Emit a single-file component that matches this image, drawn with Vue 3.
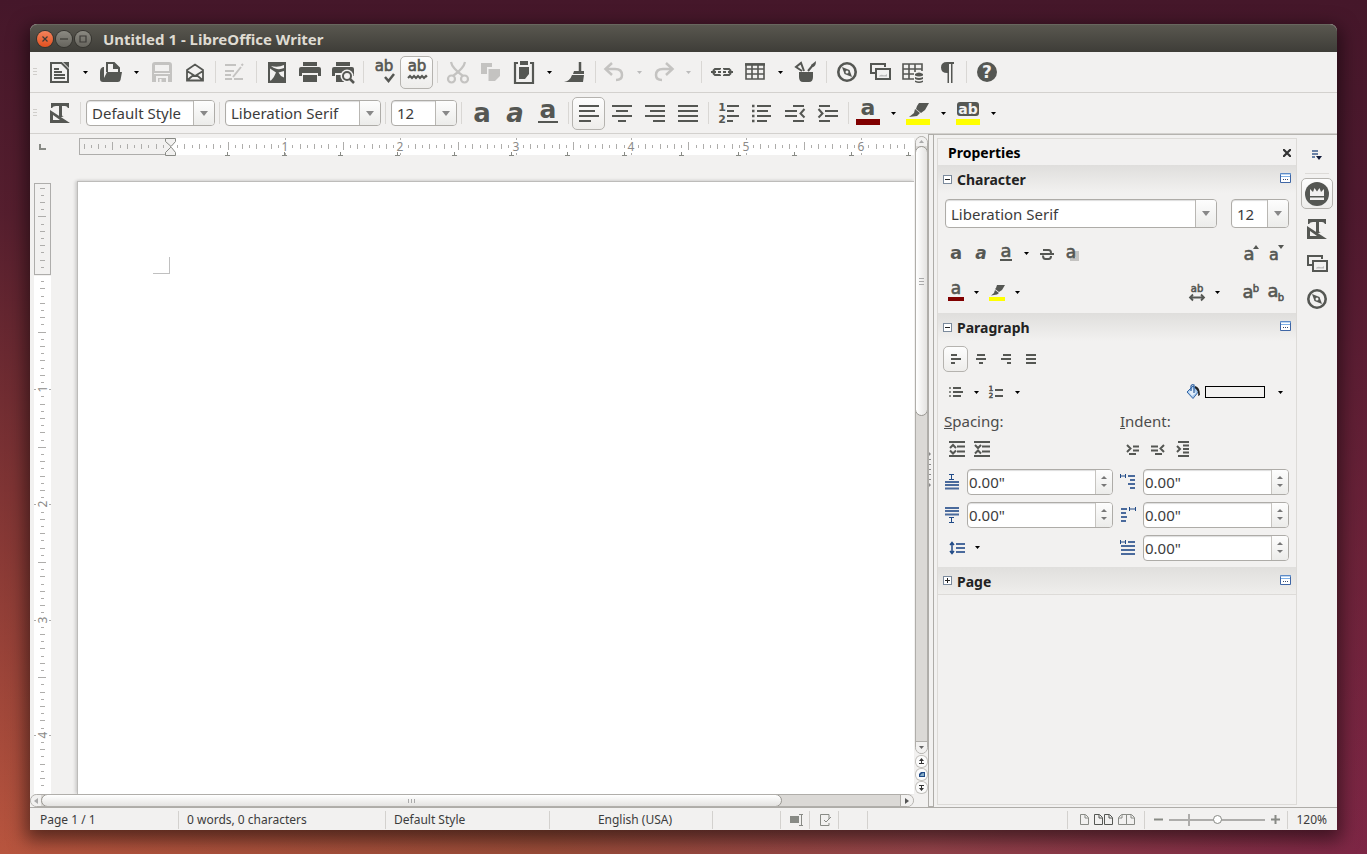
<script setup>
import { ref, computed, onMounted, onBeforeUnmount } from 'vue'

const SEP = { sep: true }
const standardTools = [
  { icon: 'new', label: 'New', drop: true },
  { icon: 'open', label: 'Open', drop: true },
  { icon: 'save', label: 'Save', off: true },
  { icon: 'mail', label: 'Email' },
  SEP,
  { icon: 'edit', label: 'Edit mode', off: true },
  SEP,
  { icon: 'pdf', label: 'Export as PDF' },
  { icon: 'print', label: 'Print' },
  { icon: 'preview', label: 'Print preview' },
  SEP,
  { icon: 'spell', label: 'Spelling' },
  { icon: 'autospell', label: 'Automatic spell checking', on: true },
  SEP,
  { icon: 'cut', label: 'Cut', off: true },
  { icon: 'copy', label: 'Copy', off: true },
  { icon: 'paste', label: 'Paste', drop: true },
  { icon: 'brush', label: 'Clone formatting' },
  SEP,
  { icon: 'undo', label: 'Undo', off: true, drop: true, size: 'narrow' },
  { icon: 'redo', label: 'Redo', off: true, drop: true, size: 'narrow' },
  SEP,
  { icon: 'link', label: 'Hyperlink' },
  { icon: 'table', label: 'Table', drop: true },
  { icon: 'draw', label: 'Show draw functions' },
  SEP,
  { icon: 'compass', label: 'Navigator' },
  { icon: 'gallery', label: 'Gallery' },
  { icon: 'data', label: 'Data sources' },
  { icon: 'pilcrow', label: 'Formatting marks' },
  SEP,
  { icon: 'help', label: 'Help' },
]
const formatTools = [
  { icon: 'bold', label: 'Bold' },
  { icon: 'italic', label: 'Italic' },
  { icon: 'underline', label: 'Underline' },
  SEP,
  { icon: 'left', label: 'Align left', on: true },
  { icon: 'center', label: 'Centre' },
  { icon: 'right', label: 'Align right' },
  { icon: 'justify', label: 'Justify' },
  SEP,
  { icon: 'numbers', label: 'Numbering' },
  { icon: 'bullets', label: 'Bullets' },
  { icon: 'outdent', label: 'Decrease indent' },
  { icon: 'indent', label: 'Increase indent' },
  SEP,
  { icon: 'fontcolor', label: 'Font colour', drop: true, size: 'medium' },
  { icon: 'highlight', label: 'Highlighting', drop: true, size: 'medium' },
  { icon: 'charback', label: 'Character background', drop: true, size: 'medium' },
]

// Rulers: sixteenths of an inch at 120% zoom, drawn only as far as the ruler reaches.
const INCH = 115.2
const MARGIN = 92
const TAB = 56.75
const hBox = ref(null)
const vBox = ref(null)
const hLength = ref(0)
const vLength = ref(0)
function ticks(length) {
  const out = []
  for (let n = -12; (n * INCH) / 16 < length - MARGIN - 4; n++) {
    if (n === 0) continue
    const mod = Math.abs(n) % 16
    out.push({ at: Math.round((n * INCH) / 16), num: mod === 0 ? n / 16 : 0, len: mod === 8 ? 8 : mod % 2 ? 3 : 5 })
  }
  return out
}
const hTicks = computed(() => ticks(hLength.value))
const vTicks = computed(() => ticks(vLength.value))
const tabs = computed(() => {
  const count = Math.max(0, Math.floor((hLength.value - MARGIN) / TAB))
  return Array.from({ length: count }, (_, i) => Math.round((i + 1) * TAB))
})
let observer
function measure() {
  hLength.value = hBox.value.clientWidth
  vLength.value = vBox.value.clientHeight
}
onMounted(() => {
  measure()
  observer = new ResizeObserver(measure)
  observer.observe(hBox.value)
  observer.observe(vBox.value)
})
onBeforeUnmount(() => observer.disconnect())

const style = ref('Default Style')
const font = ref('Liberation Serif')
const size = ref('12')
const above = ref('0.00"')
const below = ref('0.00"')
const before = ref('0.00"')
const after = ref('0.00"')
const first = ref('0.00"')
const zoom = ref(50)
</script>

<template>
  <svg class="defs" aria-hidden="true">
    <defs>
      <g id="new"><path d="M3 3h10.500L20 9.500V22H3z" fill="none" stroke="currentColor" stroke-width="2" /><path d="M15 2h6v6z" fill="currentColor" /><path d="M6 9h5M6 12h8M6 15h11M6 18h11" stroke="currentColor" stroke-width="2" /></g>
      <g id="open"><path d="M8 12V3h7l5 5v4" fill="none" stroke="currentColor" stroke-width="2" /><path d="M14 2l7 7h-7z" fill="currentColor" /><path d="M5 7H4Q1 8 1 12v7q0 3 3 3h15q2 0 2.500-2l1.500-8H8L5 18z" fill="currentColor" /></g>
      <g id="save"><path d="M5 2h14q3 0 3 3v17H2V5q0-3 3-3z" fill="currentColor" /><path d="M5 5h14v6H5z" fill="#f2f1f0" /><path d="M4 13.500h16" stroke="#f2f1f0" /><path d="M6 22v-6h12v6z" fill="#f2f1f0" /><path d="M8 18h8v4H8z" fill="currentColor" /><path d="M9.500 19h2v3h-2z" fill="#f2f1f0" /></g>
      <g id="mail"><path d="M4 10l8-5.500L20 10v10.500H4zM4 11l8 5 8-5M4.500 20l6-5M19.500 20l-6-5" fill="none" stroke="currentColor" stroke-width="1.800" /></g>
      <g id="edit" stroke="currentColor" stroke-width="2"><path d="M1 5h11M1 11h9M1 15h6M1 19h7M10 19h9" /><path d="M9 17l8-10M17.500 5.500l1.500-1.500" /></g>
      <g id="pdf"><path d="M3 2h18v21H3z" fill="currentColor" /><path d="M6 6q7 2 13-1v3q-3 1.500-7 1Q8 8 6 6z" fill="#f2f1f0" /><path d="M5 8.500l6 4Q9 18 6 20.500H5zM19 11v6.500Q15 16 13.500 12.500z" fill="#f2f1f0" /></g>
      <g id="print"><path d="M5 2h14v4H5zM1 9q0-2 2-2h18q2 0 2 2v7h-3v-3H4v3H1zM5 15h14v7H5z" fill="currentColor" /></g>
      <g id="preview"><path d="M5 2h14v4H5zM1 9q0-2 2-2h18q2 0 2 2v7h-3v-3H4v3H1zM5 15h8v7H5z" fill="currentColor" /><circle cx="16" cy="16" r="6.500" fill="#f2f1f0" /><circle cx="16" cy="16" r="4" fill="none" stroke="currentColor" stroke-width="2" /><path d="M19 19l4 4" stroke="currentColor" stroke-width="2.500" /></g>
      <g id="spell"><text x="12" y="11" font-size="15" class="glyph mid">ab</text><path d="M13 17l3.500 4L22 14" fill="none" stroke="currentColor" stroke-width="2.500" /></g>
      <g id="autospell"><text x="12" y="11" font-size="15" class="glyph mid">ab</text><path d="M3 18l2-2 2 2 2-2 2 2 2-2 2 2 2-2 2 2 2-2 1 1" fill="none" stroke="currentColor" stroke-width="2" /></g>
      <g id="cut" fill="none" stroke="currentColor" stroke-width="2.200"><circle cx="5.500" cy="19" r="3.500" /><circle cx="18.500" cy="19" r="3.500" /><path d="M5 2q1 6 12 14M19 2q-1 6-12 14" /></g>
      <g id="copy"><path d="M2 3h11v4H8v7H2z" fill="currentColor" /><path d="M9.500 9H21v7l-5 5H9.500z" fill="currentColor" /></g>
      <g id="paste"><path d="M3 3h18v20H3z" fill="none" stroke="currentColor" stroke-width="2.200" /><path d="M6 1h12v5H6z" fill="#f2f1f0" /><path d="M8 1h8v4H8zM7 7h10v7l-4 5H7z" fill="currentColor" /></g>
      <g id="brush"><path d="M17 2v9" stroke="currentColor" stroke-width="2.500" /><path d="M11 11h10v3H10zM9 15h12l-1 7H1q6-1 8-7z" fill="currentColor" /></g>
      <g id="undo"><path d="M3 9h9q7 0 7 6 0 5-6 5" fill="none" stroke="currentColor" stroke-width="2.500" /><path d="M9 3L2.500 9 9 15" fill="none" stroke="currentColor" stroke-width="2.500" /></g>
      <g id="redo"><path d="M20 9h-9q-7 0-7 6 0 5 6 5" fill="none" stroke="currentColor" stroke-width="2.500" /><path d="M14 3l6.500 6-6.500 6" fill="none" stroke="currentColor" stroke-width="2.500" /></g>
      <g id="link" fill="none" stroke="currentColor" stroke-width="2"><path d="M10 9.500V9H5l-2 2M10 14.500v.5H5l-2-2M14 9.500V9h5l2 2M14 14.500v.5h5l2-2M1 12h5M8 12h3M13 12h3M18 12h5" /></g>
      <g id="table" fill="none" stroke="currentColor" stroke-width="1.600"><path d="M3 4h18v15H3zM3 9h18M3 14h18M9 4v15M15 4v15" /><path d="M2 4.500h20" stroke-width="2.500" /></g>
      <g id="draw"><path d="M5 12h14v5q0 5-4 5H9q-4 0-4-5z" fill="currentColor" /><path d="M8 11L2 7l5-4 3 8M14 11l5-6" fill="none" stroke="currentColor" stroke-width="2" /><path d="M17 5l5-4q0 6-4 6z" fill="currentColor" /></g>
      <g id="compass"><circle cx="12" cy="12" r="8.700" fill="none" stroke="currentColor" stroke-width="2.600" /><path d="M7 7l7.500 3L17 17l-7.500-3z" fill="currentColor" /><circle cx="12" cy="12" r="1.500" fill="#f2f1f0" /></g>
      <g id="gallery" fill="none" stroke="currentColor" stroke-width="2"><path d="M7 13H3V4h14v3M8 9h14v10H8z" /><path d="M11 16q2-2 4-1t4-1v2.500h-8z" fill="#bbb" stroke="none" /></g>
      <g id="data"><path d="M14 19H2V4h19v7M2 9h19M2 14h12M8 4v15M14 4v11" fill="none" stroke="currentColor" stroke-width="1.600" /><path d="M13 12h11v11H13z" fill="#f2f1f0" /><path d="M14 14q4-3 8 0v1.500q-4 2-8 0zM14 17q4 2 8 0v2q-4 2-8 0zM14 20.500q4 2 8 0V22q-4 2-8 0z" fill="currentColor" /></g>
      <g id="pilcrow"><path d="M20 2v2h-1.500v19H17V4h-2v19h-1.500V13Q7 13 7 7.500 7 2 13 2z" fill="currentColor" /></g>
      <g id="help"><circle cx="12" cy="12" r="10" fill="currentColor" /><text x="12" y="18" font-size="17" class="glyph light">?</text></g>
      <g id="styles"><path d="M3 2h18v5h-1q-1-2-3-2h-3v9q0 2 2 2h-5V5H8Q5 5 4 7H3z" fill="currentColor" /><path d="M2 9l20 13H2zM5 14v5h7z" fill="currentColor" fill-rule="evenodd" /></g>
      <g id="bold"><text x="12" y="21" font-size="26" class="glyph">a</text></g>
      <g id="italic"><text x="12" y="21" font-size="26" class="glyph slant">a</text></g>
      <g id="underline"><text x="12" y="17" font-size="25" class="glyph">a</text><path d="M2 21h20" stroke="currentColor" stroke-width="2" /></g>
      <g id="left"><path d="M2 5h20M2 10h16M2 15h20M2 20h12" stroke="currentColor" stroke-width="2" /></g>
      <g id="center"><path d="M2 5h20M6 10h12M2 15h20M8 20h8" stroke="currentColor" stroke-width="2" /></g>
      <g id="right"><path d="M2 5h20M7 10h15M2 15h20M10 20h12" stroke="currentColor" stroke-width="2" /></g>
      <g id="justify"><path d="M2 5h20M2 10h20M2 15h20M2 20h20" stroke="currentColor" stroke-width="2" /></g>
      <g id="numbers"><text x="5" y="10" font-size="11" class="glyph">1</text><text x="5" y="22" font-size="11" class="glyph">2</text><path d="M10 5h12M10 10h7M10 15h12M10 20h6" stroke="currentColor" stroke-width="2" /></g>
      <g id="bullets"><path d="M7 5h14M7 10h11M7 15h14M7 20h10" stroke="currentColor" stroke-width="2" /><path d="M2 5h2.500M2 10h2.500M2 15h2.500M2 20h2.500" stroke="currentColor" stroke-width="2.500" /></g>
      <g id="outdent"><path d="M10 5h11M2 10h12M2 15h12M10 20h11M21.500 8l-4 4.500 4 4" fill="none" stroke="currentColor" stroke-width="2" /></g>
      <g id="indent"><path d="M3 5h11M9 10h13M9 15h13M3 20h11M2.500 8l4 4.500-4 4" fill="none" stroke="currentColor" stroke-width="2" /></g>
      <g id="fontcolor"><text x="12" y="14" font-size="22" class="glyph">a</text><path d="M0 18h24v6H0z" fill="#800000" /></g>
      <g id="highlight"><path d="M11 5l2-3h10l-4 7-4 3-5-4zM9 8l5 4-3 3-8 1 5-4z" fill="currentColor" /><path d="M0 18h24v6H0z" fill="#ff0" /></g>
      <g id="charback"><rect x="1" y="1" width="22" height="14" rx="3" fill="currentColor" /><text x="12" y="13" font-size="14" class="glyph light">ab</text><path d="M0 18h24v6H0z" fill="#ff0" /></g>
      <g id="crown"><circle cx="12" cy="12" r="12" fill="currentColor" /><path d="M5 14V7l3 3 1.500-4L12 9.500 14.500 6 16 10l3-3v7zM5 15.500h14V18H5z" fill="#f2f1f0" /></g>

      <g id="s-bold"><text x="8" y="13" font-size="18" class="glyph">a</text></g>
      <g id="s-italic"><text x="8" y="13" font-size="17" class="glyph slant">a</text></g>
      <g id="s-underline"><text x="8" y="11" font-size="18" class="glyph mid">a</text><path d="M2 14h12" stroke="currentColor" stroke-width="2" /></g>
      <g id="s-strike"><path d="M1 8h14M4 4h5.500q2.500 0 2.500 3M4 9.500Q4 13 6.500 13h3q2.500 0 2.500-3" fill="none" stroke="currentColor" stroke-width="2" /></g>
      <g id="s-shadow"><path d="M7 5h8v10H6v-3h6z" fill="#c4c3c1" /><text x="7" y="12" font-size="17" class="glyph mid">a</text></g>
      <g id="s-grow"><text x="6" y="14" font-size="18" class="glyph mid">a</text><path d="M10 3l3-4 3 4z" fill="currentColor" /></g>
      <g id="s-shrink"><text x="6" y="14" font-size="16" class="glyph mid">a</text><path d="M10-1h6l-3 4z" fill="currentColor" /></g>
      <g id="s-fontcolor"><text x="8" y="9" font-size="17" class="glyph mid">a</text><path d="M0 12h16v4H0z" fill="#800000" /></g>
      <g id="s-highlight"><path d="M7 3l1-3h8l-3 5-3 2-4-3zM6 5l4 3-2 1.500-6 1L5 8z" fill="currentColor" /><path d="M0 12h16v4H0z" fill="#ff0" /></g>
      <g id="s-spacing"><text x="8" y="7" font-size="10" class="glyph mid">ab</text><path d="M1 12.500h14M4 9.500l-3 3 3 3M12 9.500l3 3-3 3" fill="none" stroke="currentColor" stroke-width="1.800" /></g>
      <g id="s-super"><text x="5" y="13" font-size="18" class="glyph mid">a</text><text x="13" y="7" font-size="10" class="glyph mid">b</text></g>
      <g id="s-sub"><text x="5" y="12" font-size="18" class="glyph mid">a</text><text x="13" y="16" font-size="10" class="glyph mid">b</text></g>
      <g id="s-left"><path d="M3 4h6M3 8h10M3 12h4" stroke="currentColor" stroke-width="2" /></g>
      <g id="s-center"><path d="M4 4h8M3 8h10M6 12h4" stroke="currentColor" stroke-width="2" /></g>
      <g id="s-right"><path d="M5 4h8M3 8h10M9 12h4" stroke="currentColor" stroke-width="2" /></g>
      <g id="s-justify"><path d="M3 4h10M3 8h10M3 12h10" stroke="currentColor" stroke-width="2" /></g>
      <g id="s-bullets"><path d="M5 4h8M5 8h10M5 12h8" stroke="currentColor" stroke-width="2" /><path d="M1 4h2M1 8h2M1 12h2" stroke="#888a85" stroke-width="2" /></g>
      <g id="s-numbers"><text x="2" y="7" font-size="7" class="glyph mid">1</text><text x="2" y="14" font-size="7" class="glyph mid">2</text><path d="M6 6h8M6 12h8" stroke="currentColor" stroke-width="2" /></g>
      <g id="s-more"><path d="M0 1h16M0 15h16M8 5.500h8M8 10.500h8" stroke="currentColor" stroke-width="2" /><path d="M1 7l3-3 3 3M1 9.500l3 3 3-3" fill="none" stroke="currentColor" stroke-width="2" /></g>
      <g id="s-less"><path d="M0 1h16M0 15h16M8 5.500h8M8 10.500h8" stroke="currentColor" stroke-width="2" /><path d="M1 4l3 3 3-3M1 12.500l3-3 3 3" fill="none" stroke="currentColor" stroke-width="2" /></g>
      <g id="s-indent"><path d="M2 4l3.500 3.500L2 11M8 5.500h6M8 9.500h6M4 13h7" fill="none" stroke="currentColor" stroke-width="2" /></g>
      <g id="s-outdent"><path d="M14 4l-3.500 3.500L14 11M1 5.500h7M1 9.500h7M5 13h7" fill="none" stroke="currentColor" stroke-width="2" /></g>
      <g id="s-hang"><path d="M3 1h11M3 15h11M8 4.500h6M8 8h6M8 11.500h6M2 5l3 3-3 3" fill="none" stroke="currentColor" stroke-width="2" /></g>
      <g id="s-fill"><path d="M2 8l6-6 6 5-6 7.500z" fill="#a9cbee" stroke="#3465a4" /><path d="M4 8l4-4 3 5-4 3z" fill="#e4effa" /><path d="M6 7V2q1-2 3-1v8" fill="none" stroke="#3465a4" stroke-width="1.300" /><path d="M10 2q5 1 5 9l-2 1q1-5-3-8z" fill="#222" /></g>
      <g id="s-above" stroke="#204a87"><path d="M5 .5h5M7.500 1v5M5 5.500h5" /><path d="M1 8h14M1 11h14M1 14.500h14" stroke-width="2" stroke="#4a6a9c" /></g>
      <g id="s-below" stroke="#204a87"><path d="M5 10.500h5M7.500 10v5M5 15.500h5" /><path d="M1 1h14M1 4h14M1 7.500h14" stroke-width="2" stroke="#4a6a9c" /></g>
      <g id="s-before" stroke="#204a87"><path d="M.5 0v4M1 2h5M5.500 0v4" /><path d="M8 2h7M10 6h5M8 10h7M10 14h5" stroke-width="2" stroke="#4a6a9c" /></g>
      <g id="s-after" stroke="#204a87"><path d="M9.500 0v4M10 2h5M15.500 0v4" /><path d="M1 2h6M1 6h5M1 10h6M1 14h5" stroke-width="2" stroke="#4a6a9c" /></g>
      <g id="s-first" stroke="#204a87"><path d="M.5 0v4M1 2h5M5.500 0v4" /><path d="M8 2h7M1 6h14M1 10h14M1 14h14" stroke-width="2" stroke="#4a6a9c" /></g>
      <g id="s-line" stroke="#204a87"><path d="M3 3v10M1 5l2-2.500L5 5M1 11l2 2.500L5 11" fill="none" stroke-width="1.500" /><path d="M7 4h9M7 8h9M7 12h9" stroke-width="2" stroke="#4a6a9c" /></g>
      <g id="arrow"><path d="M0 0h5L2.500 3z" fill="currentColor" /></g>
      <g id="more"><path d="M.5 .5h10v9H.5z" fill="#fff" stroke="#3f66a5" /><path d="M0 1h11M1 3.500h9" stroke="#7fb0e6" stroke-width="1" /><path d="M3 6.500h1M5 6.500h1M7 6.500h1" stroke="#3b4b6c" /></g>
    </defs>
  </svg>

  <div class="desktop">
    <main class="window">
      <header class="titlebar">
        <button class="wm close" aria-label="Close"><svg viewBox="0 0 16 16"><path d="M5.500 5.500l5 5M10.500 5.500l-5 5" /></svg></button>
        <button class="wm" aria-label="Minimise"><svg viewBox="0 0 16 16"><path d="M4 8h8" /></svg></button>
        <button class="wm" aria-label="Maximise"><svg viewBox="0 0 16 16"><path d="M5 5h6v6H5z" /></svg></button>
        <h1>Untitled 1 - LibreOffice Writer</h1>
      </header>

      <div class="toolbar standard">
        <span class="grip"></span>
        <template v-for="(t, i) in standardTools" :key="i">
          <span v-if="t.sep" class="sep"></span>
          <template v-else>
            <button class="tool" :class="[t.size, { on: t.on, off: t.off }]" :aria-label="t.label"><svg class="icon"><use :href="'#' + t.icon" /></svg></button>
            <button v-if="t.drop" class="drop" :class="{ off: t.off }" :aria-label="t.label + ' options'"><svg class="tri"><use href="#arrow" /></svg></button>
          </template>
        </template>
      </div>

      <div class="toolbar">
        <span class="grip"></span>
        <button class="tool medium" aria-label="Styles"><svg class="icon"><use href="#styles" /></svg></button>
        <span class="sep"></span>
        <span class="combo small style"><input v-model="style" aria-label="Paragraph style" /><button aria-label="Choose style"><i class="caret"></i></button></span>
        <span class="sep"></span>
        <span class="combo small font"><input v-model="font" aria-label="Font name" /><button aria-label="Choose font"><i class="caret"></i></button></span>
        <span class="sep"></span>
        <span class="combo small size"><input v-model="size" aria-label="Font size" /><button aria-label="Choose size"><i class="caret"></i></button></span>
        <span class="sep"></span>
        <template v-for="(t, i) in formatTools" :key="i">
          <span v-if="t.sep" class="sep"></span>
          <template v-else>
            <button class="tool" :class="[t.size, { on: t.on }]" :aria-label="t.label"><svg class="icon"><use :href="'#' + t.icon" /></svg></button>
            <button v-if="t.drop" class="drop" :aria-label="t.label + ' options'"><svg class="tri"><use href="#arrow" /></svg></button>
          </template>
        </template>
      </div>

      <div class="body">
        <section class="editor">
          <div class="tabkind"><svg width="7" height="6"><path d="M1 0v5h6" fill="none" stroke="#888a85" stroke-width="2" /></svg></div>
          <div ref="hBox" class="hruler">
            <svg height="20" width="100%">
              <rect x="93" y="0" width="100%" height="17" fill="#fff" />
              <rect x="2.500" y=".5" width="91" height="16" fill="#f2f1f0" stroke="#aeadab" />
              <g transform="translate(93 0)" shape-rendering="crispEdges">
                <template v-for="t in hTicks" :key="t.at">
                  <template v-if="t.num"><path :d="`M${t.at} 0v2M${t.at} 15v2`" stroke="#aeadab" /><text :x="t.at" y="13" class="num">{{ t.num }}</text></template>
                  <path v-else :d="`M${t.at} ${8 - Math.floor(t.len / 2)}v${t.len}`" stroke="#aeadab" />
                </template>
                <path v-for="x in tabs" :key="x" :d="`M${x} 14v3M${x - 2} 17h5`" fill="none" stroke="#888a85" />
              </g>
              <path d="M88.500 .5h10v3l-4 4.500-1 0-5-4.500zM88.500 17.500h10v-3l-4-5-1 0-5 5z" fill="#f2f1f0" stroke="#888a85" />
            </svg>
          </div>
          <div ref="vBox" class="vruler">
            <svg width="18" height="100%">
              <rect x="0" y="93" width="17" height="100%" fill="#fff" />
              <rect x=".5" y=".5" width="16" height="91" fill="#f2f1f0" stroke="#aeadab" />
              <g transform="translate(0 91)">
                <g v-for="t in vTicks" :key="t.at" :transform="`translate(8 ${t.at})`" shape-rendering="crispEdges">
                  <template v-if="t.num"><path d="M-8 0h2M7 0h2" stroke="#aeadab" /><text transform="rotate(-90)" x="0" y="5" class="num">{{ t.num }}</text></template>
                  <path v-else :d="`M${-Math.floor(t.len / 2)} 0h${t.len}`" stroke="#aeadab" />
                </g>
              </g>
            </svg>
          </div>
          <div class="page"><div class="corner"></div></div>
          <div class="vscroll">
            <div class="vtrack">
              <button class="vbtn" aria-label="Scroll up"><svg class="tri flip"><use href="#arrow" /></svg></button>
              <div class="vthumb"><i></i><i></i><i></i></div>
              <span class="space"></span>
              <button class="vbtn down" aria-label="Scroll down"><svg class="tri"><use href="#arrow" /></svg></button>
            </div>
            <button class="nav" aria-label="Previous page"><svg viewBox="0 0 11 11"><path d="M3 5l2.500-3L8 5zM3 7h5v1H3zM5 4h1v4H5z" fill="#333" /></svg></button>
            <button class="nav" aria-label="Navigation"><svg viewBox="0 0 11 11"><path d="M3 8V5l2-2h4v5z" fill="#204a87" /><path d="M4 7q1-3 4-3v3z" fill="#8ab0c8" /></svg></button>
            <button class="nav" aria-label="Next page"><svg viewBox="0 0 11 11"><path d="M3 6h5L5.500 9zM3 3h5v1H3zM5 3h1v4H5z" fill="#333" /></svg></button>
          </div>
          <div class="hscroll">
            <button class="hbtn" aria-label="Scroll left"><svg viewBox="0 0 4 6"><path d="M4 0v6L0 3z" fill="#aaa" /></svg></button>
            <div class="hthumb"><i></i><i></i><i></i></div>
            <span class="space"></span>
            <button class="hbtn end" aria-label="Scroll right"><svg viewBox="0 0 4 6"><path d="M0 0v6l4-3z" fill="#555" /></svg></button>
          </div>
        </section>

        <div class="splitter"><svg width="3" height="40"><path d="M0 1l2 2-2 2zM0 32l2 2-2 2z" fill="#888" /><path d="M1 8v23" stroke="#888" stroke-width="2" stroke-dasharray="1 4" /></svg></div>

        <aside class="panel">
          <header class="ptitle"><h2>Properties</h2><button aria-label="Close sidebar"><svg width="8" height="8"><path d="M0 0l8 8M8 0L0 8" stroke="#333" stroke-width="2.200" /></svg></button></header>

          <h3><button class="fold" aria-label="Collapse Character"><svg><path d="M2 4.500h5" /></svg></button>Character<button class="dlg" aria-label="Character options"><svg><use href="#more" /></svg></button></h3>
          <div class="row tall">
            <span class="combo grow"><input v-model="font" aria-label="Sidebar font name" /><button aria-label="Choose font"><i class="caret"></i></button></span>
            <span class="combo psize"><input v-model="size" aria-label="Sidebar font size" /><button aria-label="Choose size"><i class="caret"></i></button></span>
          </div>
          <div class="row r39">
            <button class="st" aria-label="Bold"><svg><use href="#s-bold" /></svg></button>
            <button class="st" aria-label="Italic"><svg><use href="#s-italic" /></svg></button>
            <button class="st" aria-label="Underline"><svg><use href="#s-underline" /></svg></button>
            <button class="sd" aria-label="Underline options"><svg class="tri"><use href="#arrow" /></svg></button>
            <button class="st" aria-label="Strikethrough"><svg><use href="#s-strike" /></svg></button>
            <button class="st" aria-label="Shadow"><svg><use href="#s-shadow" /></svg></button>
            <span class="space"></span>
            <button class="st" aria-label="Increase font"><svg><use href="#s-grow" /></svg></button>
            <button class="st" aria-label="Reduce font"><svg><use href="#s-shrink" /></svg></button>
          </div>
          <div class="row r39">
            <button class="st" aria-label="Font colour"><svg><use href="#s-fontcolor" /></svg></button>
            <button class="sd" aria-label="Font colour options"><svg class="tri"><use href="#arrow" /></svg></button>
            <button class="st" aria-label="Highlighting"><svg><use href="#s-highlight" /></svg></button>
            <button class="sd" aria-label="Highlighting options"><svg class="tri"><use href="#arrow" /></svg></button>
            <span class="space"></span>
            <button class="st" aria-label="Character spacing"><svg><use href="#s-spacing" /></svg></button>
            <button class="sd gap" aria-label="Spacing options"><svg class="tri"><use href="#arrow" /></svg></button>
            <button class="st" aria-label="Superscript"><svg><use href="#s-super" /></svg></button>
            <button class="st" aria-label="Subscript"><svg><use href="#s-sub" /></svg></button>
          </div>

          <h3><button class="fold" aria-label="Collapse Paragraph"><svg><path d="M2 4.500h5" /></svg></button>Paragraph<button class="dlg" aria-label="Paragraph options"><svg><use href="#more" /></svg></button></h3>
          <div class="row r36">
            <button class="st on" aria-label="Left"><svg><use href="#s-left" /></svg></button>
            <button class="st" aria-label="Centre"><svg><use href="#s-center" /></svg></button>
            <button class="st" aria-label="Right"><svg><use href="#s-right" /></svg></button>
            <button class="st" aria-label="Justified"><svg><use href="#s-justify" /></svg></button>
          </div>
          <div class="row r30">
            <button class="st" aria-label="Bullets"><svg><use href="#s-bullets" /></svg></button>
            <button class="sd" aria-label="Bullet options"><svg class="tri"><use href="#arrow" /></svg></button>
            <button class="st" aria-label="Numbering"><svg><use href="#s-numbers" /></svg></button>
            <button class="sd" aria-label="Numbering options"><svg class="tri"><use href="#arrow" /></svg></button>
            <span class="space"></span>
            <button class="st" aria-label="Background colour"><svg><use href="#s-fill" /></svg></button>
            <span class="swatch"></span>
            <button class="sd" aria-label="Background options"><svg class="tri"><use href="#arrow" /></svg></button>
          </div>
          <div class="cols">
            <div class="col">
              <label for="above" class="lab"><u>S</u>pacing:</label>
              <div class="line"><button class="st" aria-label="Increase spacing"><svg><use href="#s-more" /></svg></button><button class="st" aria-label="Decrease spacing"><svg><use href="#s-less" /></svg></button></div>
              <div class="spin"><svg><use href="#s-above" /></svg><span><input id="above" v-model="above" /><b><button class="up" aria-label="Increase above"></button><button aria-label="Decrease above"></button></b></span></div>
              <div class="spin"><svg><use href="#s-below" /></svg><span><input v-model="below" aria-label="Below" /><b><button class="up" aria-label="Increase below"></button><button aria-label="Decrease below"></button></b></span></div>
              <div class="spin"><button class="st" aria-label="Line spacing"><svg><use href="#s-line" /></svg></button><button class="sd" aria-label="Line spacing options"><svg class="tri"><use href="#arrow" /></svg></button></div>
            </div>
            <div class="col">
              <label for="before" class="lab"><u>I</u>ndent:</label>
              <div class="line"><button class="st" aria-label="Increase indent"><svg><use href="#s-indent" /></svg></button><button class="st" aria-label="Decrease indent"><svg><use href="#s-outdent" /></svg></button><button class="st" aria-label="Hanging indent"><svg><use href="#s-hang" /></svg></button></div>
              <div class="spin"><svg><use href="#s-before" /></svg><span><input id="before" v-model="before" /><b><button class="up" aria-label="Increase before"></button><button aria-label="Decrease before"></button></b></span></div>
              <div class="spin"><svg><use href="#s-after" /></svg><span><input v-model="after" aria-label="After" /><b><button class="up" aria-label="Increase after"></button><button aria-label="Decrease after"></button></b></span></div>
              <div class="spin"><svg><use href="#s-first" /></svg><span><input v-model="first" aria-label="First line" /><b><button class="up" aria-label="Increase first line"></button><button aria-label="Decrease first line"></button></b></span></div>
            </div>
          </div>

          <h3 class="last"><button class="fold" aria-label="Expand Page"><svg><path d="M2 4.500h5M4.500 2v5" /></svg></button>Page<button class="dlg" aria-label="Page options"><svg><use href="#more" /></svg></button></h3>
        </aside>

        <nav class="deck">
          <button class="menu" aria-label="Sidebar settings"><svg width="10" height="11"><path d="M0 2h6M0 5h6M0 8h3" stroke="#3b5b8c" stroke-width="1.500" /><path d="M4 7h6L7 11z" fill="#111a3a" /></svg></button>
          <button class="on" aria-label="Properties"><svg class="icon"><use href="#crown" /></svg></button>
          <button aria-label="Styles"><svg class="icon"><use href="#styles" /></svg></button>
          <button aria-label="Gallery"><svg class="icon"><use href="#gallery" /></svg></button>
          <button aria-label="Navigator"><svg class="icon"><use href="#compass" /></svg></button>
        </nav>
      </div>

      <footer class="status">
        <span class="cell c1">Page 1 / 1</span>
        <span class="cell c2">0 words, 0 characters</span>
        <span class="cell c3">Default Style</span>
        <span class="cell c4">English (USA)</span>
        <span class="cell c5"></span>
        <span class="cell c6"><svg width="14" height="12"><path d="M1 2h9v7H1z" fill="#888a85" /><path d="M10 .5h4M12.500 1v10M10 11.500h4" stroke="#888a85" /></svg></span>
        <span class="cell c6"><svg width="14" height="12"><path d="M11 5V.5H2.500v11H11V9M6 6l2 2 5-5" fill="none" stroke="#888a85" /></svg></span>
        <span class="cell c6"></span>
        <span class="cell c7"></span>
        <span class="cell views">
          <button aria-label="Single page"><svg width="9" height="11"><path d="M.5 .5h5l3 3v7h-8zM5 1v3h3" fill="none" stroke="#888a85" /></svg></button>
          <button aria-label="Multiple pages"><svg width="19" height="11"><path d="M.5 .5h5l3 3v7h-8zM5 1v3h3M10.500 .5h5l3 3v7h-8zM15 1v3h3" fill="none" stroke="#555753" /></svg></button>
          <button aria-label="Book view"><svg width="17" height="11"><path d="M3.500 .5h5v10h-8v-7zM4 1v3H1M8.500 .5h5l3 3v7h-8zM13 1v3h3" fill="none" stroke="#888a85" /></svg></button>
        </span>
        <span class="cell zoom">
          <button aria-label="Zoom out"><svg width="9" height="9"><path d="M0 4.500h9" stroke="#888a85" stroke-width="2" /></svg></button>
          <input v-model="zoom" type="range" aria-label="Zoom" />
          <button aria-label="Zoom in"><svg width="9" height="9"><path d="M0 4.500h9M4.500 0v9" stroke="#888a85" stroke-width="2" /></svg></button>
        </span>
        <span class="pct">120%</span>
      </footer>
    </main>
  </div>
</template>

<style>
html, body { margin: 0; }
.glyph { font-family: "DejaVu Sans", sans-serif; font-weight: 700; text-anchor: middle; fill: currentColor; }
.glyph.mid { font-family: "DejaVu Sans", sans-serif; font-weight: 400; stroke: currentColor; stroke-width: .6px; }
.glyph.light { fill: #f2f1f0; }
.glyph.slant { font-style: oblique; }
</style>

<style scoped>
* { box-sizing: border-box; }
button { border: 0; padding: 0; margin: 0; background: none; color: inherit; font: inherit; display: flex; align-items: center; justify-content: center; flex: none; }
input { border: 0; outline: 0; background: none; width: 100%; min-width: 0; margin: 0; padding: 0; font: inherit; color: inherit; }
svg { display: block; flex: none; }
.defs { position: absolute; width: 0; height: 0; }
.desktop {
  height: 100vh; padding: 24px 30px; font-family: "Noto Sans", sans-serif; font-size: 15px; line-height: 20px; color: #3c3c3c;
  background: linear-gradient(180deg, #45172a 0%, rgba(74, 24, 44, .9) 25%, rgba(90, 30, 45, .5) 65%, rgba(90, 30, 45, 0) 100%), linear-gradient(90deg, #b8553e 0%, #9a4c38 40%, #94434a 68%, #7d2645 100%);
}
.window { height: 100%; display: flex; flex-direction: column; background: #f2f1f0; border-radius: 7px 7px 0 0; box-shadow: 0 6px 18px 4px rgba(0, 0, 0, .5); }
.titlebar { height: 28px; flex: none; display: flex; align-items: center; gap: 3px; padding: 0 7px; border-radius: 7px 7px 0 0; background: linear-gradient(#59574f, #3e3d38); border-top: 1px solid #68665e; }
.titlebar h1 { margin: 0 0 0 9px; font-size: 15px; line-height: 20px; font-weight: 700; color: #dfdbd2; }
.wm { width: 16px; height: 16px; border-radius: 50%; background: linear-gradient(#8b8a82, #66645d); box-shadow: 0 0 0 1px #35342f; }
.wm.close { background: linear-gradient(#f4835c, #e2501f); }
.wm svg { width: 16px; height: 16px; fill: none; stroke: #3c3b37; stroke-width: 1.2; }
.toolbar { height: 41px; flex: none; display: flex; align-items: center; border-bottom: 1px solid #d3d1ce; color: #555753; }
.grip { width: 4px; height: 9px; margin: 0 7px 0 3px; background: repeating-linear-gradient(#d0cecb 0 1px, transparent 1px 3px); }
.standard .grip { margin-right: 6px; }
.sep { width: 8px; height: 22px; flex: none; background: linear-gradient(#d9d7d4, #d9d7d4) 4px 0 / 1px 100% no-repeat; }
.tool { width: 33px; height: 33px; }
.tool.medium { width: 32px; }
.tool.narrow { width: 31px; }
.icon { width: 24px; height: 24px; overflow: visible; }
.on { border: 1px solid #b5b3af; border-radius: 5px; background: linear-gradient(#fdfdfd, #eeedeb); }
.off { color: #c4c3c1; }
.drop { width: 18px; height: 33px; color: #000; }
.drop.off { color: #bbb; }
.tri { width: 5px; height: 3px; }
.tri.flip { transform: rotate(180deg); color: #aaa; }
.combo { display: flex; height: 29px; flex: none; border: 1px solid #aeaca8; border-radius: 4px; background: #fff; box-shadow: inset 0 1px 1px #ddd; overflow: hidden; color: #3c3c3c; }
.combo.small { height: 26px; margin-left: 2px; }
.combo input { flex: 1; padding-left: 5px; }
.combo button { width: 21px; border-left: 1px solid #b9b7b3; background: linear-gradient(#fdfdfd, #ececea); }
.caret { width: 0; height: 0; border: 4px solid transparent; border-top: 5px solid #888; border-bottom: 0; }
.combo.style { width: 129px; }
.combo.font { width: 156px; }
.combo.size { width: 66px; }

.body { flex: 1; min-height: 0; display: flex; background: linear-gradient(#b5b3af, #b5b3af) right top / 409px 1px no-repeat; }
.editor { flex: 1; min-width: 0; display: grid; grid-template-columns: 47px minmax(0, 1fr) 14px; grid-template-rows: 47px minmax(0, 1fr) 13px; }
.tabkind { padding: 10px 0 0 9px; }
.hruler { padding-top: 4px; overflow: hidden; }
.vruler { padding: 2px 0 0 4px; overflow: hidden; }
.num { font: 12px "Noto Sans", sans-serif; fill: #8b8a88; text-anchor: middle; }
.page { background: #fff; border: 1px solid #bdbcba; border-width: 1px 0 0 1px; box-shadow: -2px 0 3px rgba(0, 0, 0, .12), 0 -1px 3px rgba(0, 0, 0, .08); padding: 75px 0 0 75px; }
.corner { width: 17px; height: 17px; border: solid #c0c0c0; border-width: 0 1px 1px 0; }
.vscroll { grid-row: 1 / 3; grid-column: 3; display: flex; flex-direction: column; align-items: center; gap: 2px; padding-top: 2px; background: #f2f1f0; }
.vtrack { flex: 1; width: 13px; display: flex; flex-direction: column; background: #dbd9d6; border: 1px solid #b0aeaa; border-radius: 7px; overflow: hidden; }
.vbtn { height: 9px; background: #f2f1f0; }
.vbtn.down { height: 12px; border-top: 1px solid #b0aeaa; color: #666; }
.vthumb { width: 13px; height: 270px; margin-left: -1px; border: 1px solid #999792; border-radius: 7px; background: linear-gradient(90deg, #fff, #e4e3e1); display: flex; flex-direction: column; align-items: center; justify-content: center; gap: 2px; }
.vthumb i { width: 5px; height: 1px; background: #aaa; }
.space { flex: 1; }
.nav { width: 11px; height: 11px; border-radius: 5px; background: #fbfbfb; box-shadow: 0 0 0 1px #c4c2be; }
.nav:last-child { margin-bottom: 1px; }
.nav svg { width: 11px; height: 11px; }
.hscroll { grid-column: 1 / 3; display: flex; background: #dbd9d6; border: 1px solid #b0aeaa; border-radius: 7px; overflow: hidden; }
.hbtn { width: 10px; background: #f2f1f0; }
.hbtn.end { width: 13px; border-left: 1px solid #b0aeaa; }
.hbtn svg { width: 4px; height: 6px; }
.hthumb { width: 84%; margin: -1px 0; border: 1px solid #999792; border-radius: 7px; background: linear-gradient(#fff, #e4e3e1); display: flex; align-items: center; justify-content: center; gap: 2px; }
.hthumb i { width: 1px; height: 4px; background: #aaa; }
.splitter { width: 6px; flex: none; border: 1px solid #aeaca8; display: flex; align-items: center; }

.panel { width: 360px; flex: none; margin: 4px 0 2px 3px; border: 1px solid #dddbd8; color: #3c3c3c; }
.ptitle { height: 26px; display: flex; align-items: center; justify-content: space-between; padding: 2px 5px 0 10px; }
.ptitle h2 { margin: 0; font-size: 14px; line-height: 20px; color: #000; }
.panel h3 { height: 28px; margin: 0; padding: 2px 5px 0; display: flex; align-items: center; font-size: 14px; line-height: 20px; color: #222; background: linear-gradient(#dfdedc, #f2f1f0); }
.panel h3.last { border-bottom: 1px solid #dddbd8; background: linear-gradient(#e0dfdd, #efeeec); }
.fold { width: 9px; height: 9px; margin: 0 5px 2px 0; background: #fff; box-shadow: inset 0 0 0 1px #7b8a9c; }
.fold svg { width: 9px; height: 9px; stroke: #222; }
.dlg { margin: 0 0 4px auto; }
.dlg svg { width: 11px; height: 10px; }
.row { display: flex; align-items: center; padding: 0 8px 0 5px; color: #555753; }
.row.tall { height: 41px; padding: 0 7px; gap: 14px; }
.grow { flex: 1; }
.psize { width: 58px; }
.r39 { height: 39px; }
.r36 { height: 36px; }
.r30 { height: 30px; }
.row.r39 + h3 { margin-top: 1px; }
.st { width: 25px; height: 26px; }
.st.on { background: linear-gradient(#fdfdfd, #eeedeb); }
.st svg { width: 16px; height: 16px; overflow: visible; }
.sd { width: 16px; height: 26px; color: #000; }
.st .tri, .sd .tri { width: 5px; height: 3px; }
.sd.gap { margin-right: 13px; }
.swatch { width: 60px; height: 12px; border: 1px solid #000; margin-right: 7px; }
.cols { display: grid; grid-template-columns: minmax(0, 1fr) minmax(0, 1fr); gap: 7px; padding: 0 7px 3px 6px; }
.lab { display: block; height: 28px; line-height: 28px; color: #4c4c4c; }
.line { display: flex; height: 27px; margin-bottom: 3px; align-items: center; color: #555753; }
.spin { display: flex; height: 33px; align-items: center; }
.spin > svg { width: 16px; height: 16px; margin-right: 7px; overflow: visible; }
.spin > span { flex: 1; min-width: 0; display: flex; height: 26px; border: 1px solid #aeaca8; border-radius: 4px; background: #fff; overflow: hidden; box-shadow: inset 0 1px 1px #ddd; }
.spin input { flex: 1; padding-left: 1px; }
.spin b { width: 17px; flex: none; border-left: 1px solid #c6c4c0; background: linear-gradient(#fdfdfd, #ececea); display: flex; flex-direction: column; align-items: center; justify-content: center; gap: 5px; }
.spin b button { width: 0; height: 0; border: 3px solid transparent; border-top: 3px solid #777; border-bottom: 0; }
.spin b .up { border-top: 0; border-bottom: 3px solid #777; }

.deck { width: 40px; flex: none; display: flex; flex-direction: column; align-items: center; gap: 4px; padding-top: 1px; color: #555753; }
.deck button { width: 32px; height: 31px; }
.deck button.menu { height: 39px; width: 24px; border-bottom: 1px solid #dddbd8; }

.status { height: 23px; flex: none; display: flex; align-items: center; border-top: 1px solid #aeaca8; font-size: 12px; line-height: 16px; padding: 1px 10px 0 10px; }
.cell { height: 18px; flex: none; border-right: 1px solid #d3d1ce; display: flex; align-items: center; margin-right: 8px; }
.c1 { width: 139px; }
.c2 { width: 199px; }
.c3 { width: 156px; }
.c4 { width: 155px; justify-content: center; }
.c5 { width: 60px; }
.c6 { width: 21px; }
.c7 { flex: 1; }
.views { gap: 5px; width: 69px; padding-right: 9px; justify-content: flex-end; }
.zoom { gap: 6px; width: 135px; padding: 0 7px 0 1px; }
.zoom input { appearance: none; flex: 1; height: 12px; background: linear-gradient(#aeadab, #aeadab) 19px 0 / 2px 100% no-repeat, linear-gradient(#aeadab, #aeadab) 0 5px / 100% 2px no-repeat; }
.zoom input::-webkit-slider-thumb { appearance: none; width: 9px; height: 9px; border: 1px solid #888a85; border-radius: 50%; background: #fff; }
</style>
